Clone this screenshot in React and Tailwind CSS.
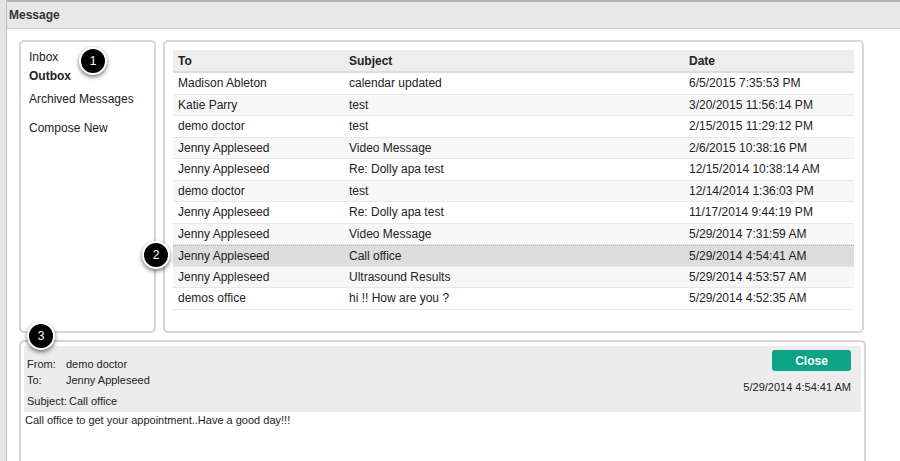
import React from 'react'

const rows = [
  ['Madison Ableton', 'calendar updated', '6/5/2015 7:35:53 PM'],
  ['Katie Parry', 'test', '3/20/2015 11:56:14 PM'],
  ['demo doctor', 'test', '2/15/2015 11:29:12 PM'],
  ['Jenny Appleseed', 'Video Message', '2/6/2015 10:38:16 PM'],
  ['Jenny Appleseed', 'Re: Dolly apa test', '12/15/2014 10:38:14 AM'],
  ['demo doctor', 'test', '12/14/2014 1:36:03 PM'],
  ['Jenny Appleseed', 'Re: Dolly apa test', '11/17/2014 9:44:19 PM'],
  ['Jenny Appleseed', 'Video Message', '5/29/2014 7:31:59 AM'],
  ['Jenny Appleseed', 'Call office', '5/29/2014 4:54:41 AM'],
  ['Jenny Appleseed', 'Ultrasound Results', '5/29/2014 4:53:57 AM'],
  ['demos office', 'hi !! How are you ?', '5/29/2014 4:52:35 AM'],
]

function Badge({ n, className }) {
  return (
    <div className={`absolute w-[28px] h-[28px] rounded-full bg-black border-2 border-white shadow-[0_2px_4px_rgba(0,0,0,0.55)] text-white text-[12px] flex items-center justify-center ${className}`}>
      {n}
    </div>
  )
}

export default function App() {
  return (
    <div className="relative w-[900px] h-[461px] overflow-hidden flex bg-white text-[#222] font-['Liberation_Sans',Arial,sans-serif]">
      {/* page behind modal */}
      <div className="w-[7px] flex-shrink-0 bg-[#e4e4e4] border-r border-[#bdbdbd]" />

      <div className="flex-1 flex flex-col min-w-0">
        {/* Title bar */}
        <div className="h-[29px] flex-shrink-0 flex items-center pl-[2px] bg-[#e8e8e8] border-t-2 border-t-[#b5b5b5] border-b border-b-[#cfcfcf] text-[12px] font-bold text-[#333]">
          Message
        </div>

        <div className="flex-1 flex flex-col pt-[11px] pl-[12px] gap-[7px]">
          <div className="flex gap-[7px] h-[293px] flex-shrink-0">
            {/* Nav */}
            <div className="w-[137px] rounded-[5px] border-2 border-[#d6d6d6] pl-[8px] pt-[7px] text-[12px] text-[#222]">
              <div className="leading-[16px]">Inbox</div>
              <div className="leading-[16px] font-bold mt-[3px]">Outbox</div>
              <div className="leading-[16px] mt-[7px]">Archived Messages</div>
              <div className="leading-[16px] mt-[13px]">Compose New</div>
            </div>

            {/* Table */}
            <div className="w-[701px] rounded-[5px] border-2 border-[#d6d6d6] pt-[8px] pl-[8px]">
              <div className="w-[681px] text-[12px]">
                <div className="flex h-[23px] items-center bg-[#eeeeee] border-b-2 border-[#dcdcdc] font-bold">
                  <div className="w-[176px] pl-[5px]">To</div>
                  <div className="w-[340px]">Subject</div>
                  <div className="flex-1">Date</div>
                </div>
                {rows.map((r, i) => {
                  const sel = i === 8
                  const bg = sel ? 'bg-[#dddddd] border-t border-dotted border-t-[#aaa]' : i % 2 === 1 ? 'bg-[#f7f7f7]' : 'bg-white'
                  return (
                    <div key={i} className={`flex h-[21.5px] items-center border-b border-[#e8e8e8] ${bg}`}>
                      <div className="w-[176px] pl-[5px]">{r[0]}</div>
                      <div className="w-[340px]">{r[1]}</div>
                      <div className="flex-1">{r[2]}</div>
                    </div>
                  )
                })}
              </div>
            </div>
          </div>

          {/* Message detail */}
          <div className="w-[847px] flex-1 rounded-t-[5px] border-2 border-b-0 border-[#d6d6d6] pt-[4px] px-[3px]">
            <div className="bg-[#ececec] h-[66px] flex justify-between pl-[3px] pr-[10px] pt-[10px]">
              <div className="text-[11px] text-[#222]">
                <div className="flex leading-[16px]">
                  <span className="w-[39px]">From:</span>
                  <span>demo doctor</span>
                </div>
                <div className="flex leading-[16px]">
                  <span className="w-[39px]">To:</span>
                  <span>Jenny Appleseed</span>
                </div>
                <div className="flex leading-[16px] mt-[5px]">
                  <span className="w-[42px]">Subject:</span>
                  <span>Call office</span>
                </div>
              </div>
              <div className="flex flex-col items-end -mt-[6px]">
                <button className="w-[79px] h-[21px] rounded-[3px] bg-[#0ca386] text-white text-[12px] font-bold">Close</button>
                <div className="text-[11px] mt-[8px]">5/29/2014 4:54:41 AM</div>
              </div>
            </div>
            <div className="text-[11px] leading-[16px] pl-[1px]">Call office to get your appointment..Have a good day!!!</div>
          </div>
        </div>
      </div>

      <Badge n="1" className="left-[79px] top-[47px]" />
      <Badge n="2" className="left-[142px] top-[241px]" />
      <Badge n="3" className="left-[27px] top-[322px]" />
    </div>
  )
}
